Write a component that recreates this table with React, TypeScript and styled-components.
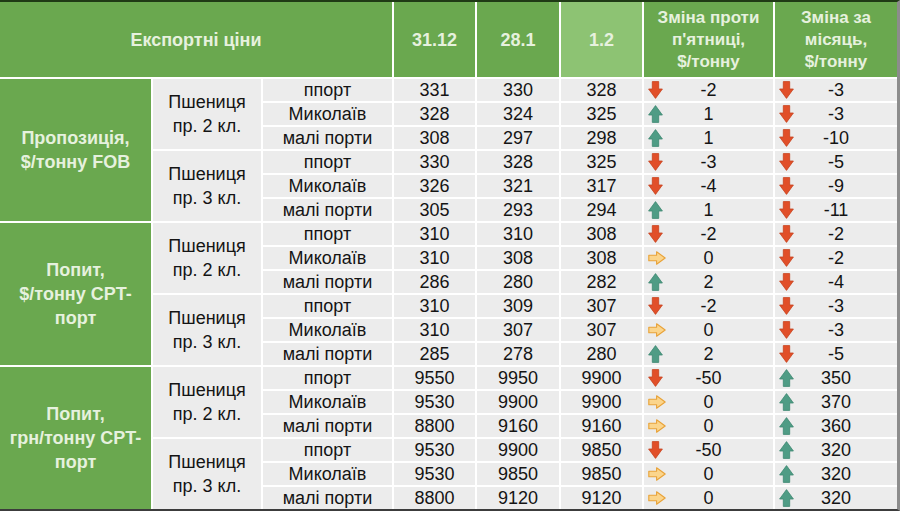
import React from "react";
import styled, { createGlobalStyle } from "styled-components";

const GlobalStyle = createGlobalStyle`
  html, body {
    margin: 0;
    padding: 0;
    background: #ffffff;
  }
  body {
    font-family: "Liberation Sans", Arial, sans-serif;
  }
`;

const GREEN = "#6aa84f";
const PALE = "#e6f1de";

const Table = styled.div`
  display: grid;
  grid-template-columns: 151px 108px 129px 81px 82px 81px 129px 122px;
  grid-template-rows: 75px repeat(18, 22px);
  gap: 2px;
  width: 897px;
  background: #ffffff;
  border-top: 2px solid #1f3a15;
  border-bottom: 2px solid #3c3c3c;
  border-right: 3px solid #8c8c8c;
`;

const HeadCell = styled.div<{ $span?: number; $light?: boolean; $small?: boolean }>`
  grid-column: span ${(p) => p.$span ?? 1};
  display: flex;
  align-items: center;
  justify-content: center;
  text-align: center;
  background: ${(p) => (p.$light ? "#8dc373" : GREEN)};
  color: ${PALE};
  font-weight: bold;
  font-size: ${(p) => (p.$small ? "17px" : "18px")};
  line-height: 22px;
`;

const GroupCell = styled.div`
  grid-row: span 6;
  display: flex;
  align-items: center;
  justify-content: center;
  text-align: center;
  background: ${GREEN};
  color: ${PALE};
  font-weight: bold;
  font-size: 18px;
  line-height: 24px;
`;

const ClassCell = styled.div`
  grid-row: span 3;
  display: flex;
  align-items: center;
  justify-content: center;
  text-align: center;
  background: #ececec;
  color: #141414;
  font-size: 18px;
  line-height: 24px;
`;

const Cell = styled.div`
  display: flex;
  align-items: center;
  justify-content: center;
  background: #ececec;
  color: #141414;
  font-size: 18px;
  line-height: 22px;
`;

const ChangeCell = styled.div`
  display: grid;
  grid-template-columns: 26px 1fr 26px;
  align-items: center;
  background: #ececec;
  color: #141414;
  font-size: 18px;
  line-height: 22px;
  text-align: center;
`;

const ArrowBox = styled.span`
  display: flex;
  align-items: center;
  padding-left: 4px;
`;

const Arrow: React.FC<{ v: number }> = ({ v }) => {
  if (v < 0)
    return (
      <svg width="15" height="18" viewBox="0 0 15 18">
        <path d="M4.3 0.6 H10.7 V8 H14.4 L7.5 17.4 L0.6 8 H4.3 Z" fill="#e14f29" stroke="#c6421e" strokeWidth="0.8" strokeLinejoin="round" />
      </svg>
    );
  if (v > 0)
    return (
      <svg width="15" height="18" viewBox="0 0 15 18">
        <path d="M4.3 17.4 H10.7 V10 H14.4 L7.5 0.6 L0.6 10 H4.3 Z" fill="#4f9c85" stroke="#3e8871" strokeWidth="0.8" strokeLinejoin="round" />
      </svg>
    );
  return (
    <svg width="18" height="14" viewBox="0 0 18 14">
      <path d="M0.8 4.3 V9.7 H8.6 V13.2 L17.2 7 L8.6 0.8 V4.3 Z" fill="#fbd58c" stroke="#e8a238" strokeWidth="1.1" strokeLinejoin="round" />
    </svg>
  );
};

const Change: React.FC<{ v: number }> = ({ v }) => (
  <ChangeCell>
    <ArrowBox>
      <Arrow v={v} />
    </ArrowBox>
    <span>{v}</span>
    <span />
  </ChangeCell>
);

type Row = [string, number, number, number, number, number];
type Klass = { name: string; rows: Row[] };
type Group = { label: React.ReactNode; classes: Klass[] };

const groups: Group[] = [
  {
    label: (
      <>
        Пропозиція,
        <br />
        $/тонну FOB
      </>
    ),
    classes: [
      {
        name: "пр. 2 кл.",
        rows: [
          ["ппорт", 331, 330, 328, -2, -3],
          ["Миколаїв", 328, 324, 325, 1, -3],
          ["малі порти", 308, 297, 298, 1, -10],
        ],
      },
      {
        name: "пр. 3 кл.",
        rows: [
          ["ппорт", 330, 328, 325, -3, -5],
          ["Миколаїв", 326, 321, 317, -4, -9],
          ["малі порти", 305, 293, 294, 1, -11],
        ],
      },
    ],
  },
  {
    label: (
      <>
        Попит,
        <br />
        $/тонну CPT-
        <br />
        порт
      </>
    ),
    classes: [
      {
        name: "пр. 2 кл.",
        rows: [
          ["ппорт", 310, 310, 308, -2, -2],
          ["Миколаїв", 310, 308, 308, 0, -2],
          ["малі порти", 286, 280, 282, 2, -4],
        ],
      },
      {
        name: "пр. 3 кл.",
        rows: [
          ["ппорт", 310, 309, 307, -2, -3],
          ["Миколаїв", 310, 307, 307, 0, -3],
          ["малі порти", 285, 278, 280, 2, -5],
        ],
      },
    ],
  },
  {
    label: (
      <>
        Попит,
        <br />
        грн/тонну CPT-
        <br />
        порт
      </>
    ),
    classes: [
      {
        name: "пр. 2 кл.",
        rows: [
          ["ппорт", 9550, 9950, 9900, -50, 350],
          ["Миколаїв", 9530, 9900, 9900, 0, 370],
          ["малі порти", 8800, 9160, 9160, 0, 360],
        ],
      },
      {
        name: "пр. 3 кл.",
        rows: [
          ["ппорт", 9530, 9900, 9850, -50, 320],
          ["Миколаїв", 9530, 9850, 9850, 0, 320],
          ["малі порти", 8800, 9120, 9120, 0, 320],
        ],
      },
    ],
  },
];

export default function App() {
  return (
    <>
      <GlobalStyle />
      <Table>
        <HeadCell $span={3}>Експортні ціни</HeadCell>
        <HeadCell>31.12</HeadCell>
        <HeadCell>28.1</HeadCell>
        <HeadCell $light>1.2</HeadCell>
        <HeadCell $small>
          Зміна проти
          <br />
          п'ятниці,
          <br />
          $/тонну
        </HeadCell>
        <HeadCell $small>
          Зміна за
          <br />
          місяць,
          <br />
          $/тонну
        </HeadCell>
        {groups.map((g, gi) => (
          <React.Fragment key={gi}>
            <GroupCell>{g.label}</GroupCell>
            {g.classes.map((k, ki) => (
              <React.Fragment key={ki}>
                <ClassCell>
                  Пшениця
                  <br />
                  {k.name}
                </ClassCell>
                {k.rows.map((r, ri) => (
                  <React.Fragment key={ri}>
                    <Cell>{r[0]}</Cell>
                    <Cell>{r[1]}</Cell>
                    <Cell>{r[2]}</Cell>
                    <Cell>{r[3]}</Cell>
                    <Change v={r[4]} />
                    <Change v={r[5]} />
                  </React.Fragment>
                ))}
              </React.Fragment>
            ))}
          </React.Fragment>
        ))}
      </Table>
    </>
  );
}
